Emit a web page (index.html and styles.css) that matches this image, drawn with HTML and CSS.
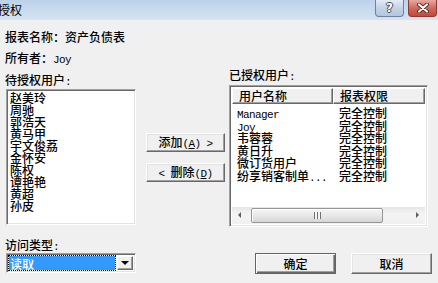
FILE: index.html
```html
<!DOCTYPE html>
<html lang="zh-CN">
<head>
    <meta charset="UTF-8">
    <title>授权</title>
    <link rel="stylesheet" href="styles.css">
</head>
<body>

    <div class="window">
        <div class="titlebar">
            <span class="title">授权</span>
            <div class="title-buttons">
                <span class="tb-btn help">?</span>
                <span class="tb-btn close">
                    <svg width="14" height="10" viewBox="0 0 14 10">
                        <path d="M3 1.5 L11 8.5 M11 1.5 L3 8.5" stroke="#5a2420" stroke-width="4" stroke-linecap="round"/>
                        <path d="M3 1.5 L11 8.5 M11 1.5 L3 8.5" stroke="#fff" stroke-width="2.2" stroke-linecap="round"/>
                    </svg>
                </span>
            </div>
        </div>

        <div class="content">
            <div class="info">报表名称：资产负债表</div>
            <div class="info owner">所有者：<span class="mono">Joy</span></div>

            <div class="lists">
                <div class="col-left">
                    <div class="label">待授权用户<span class="mono">:</span></div>
                    <ul class="listbox">
                        <li>赵美玲</li>
                        <li>周驰</li>
                        <li>郭浩天</li>
                        <li>黄马甲</li>
                        <li>宇文俊荔</li>
                        <li>金怀安</li>
                        <li>陈权</li>
                        <li>谭艳艳</li>
                        <li>黄超</li>
                        <li>孙皮</li>
                    </ul>
                </div>

                <div class="col-mid">
                    <button class="btn move">添加<span class="mono">(<u>A</u>) &gt;</span></button>
                    <button class="btn move"><span class="mono">&lt; </span>删除<span class="mono">(<u>D</u>)</span></button>
                </div>

                <div class="col-right">
                    <div class="label">已授权用户<span class="mono">:</span></div>
                    <div class="listview">
                        <div class="lv-head">
                            <span class="lv-col c1">用户名称</span>
                            <span class="lv-col c2">报表权限</span>
                            <span class="lv-fill"></span>
                        </div>
                        <div class="lv-body">
                            <div class="lv-row"><span class="c1 mono">Manager</span><span class="c2">完全控制</span></div>
                            <div class="lv-row"><span class="c1 mono">Joy</span><span class="c2">完全控制</span></div>
                            <div class="lv-row"><span class="c1">韦蓉蓉</span><span class="c2">完全控制</span></div>
                            <div class="lv-row"><span class="c1">黄日升</span><span class="c2">完全控制</span></div>
                            <div class="lv-row"><span class="c1">微订货用户</span><span class="c2">完全控制</span></div>
                            <div class="lv-row"><span class="c1">纷享销客制单<span class="mono">...</span></span><span class="c2">完全控制</span></div>
                        </div>
                        <div class="hscroll">
                            <span class="sb-arrow left"></span>
                            <span class="sb-thumb"><span class="grip"></span></span>
                            <span class="sb-track"></span>
                            <span class="sb-arrow right"></span>
                        </div>
                    </div>
                </div>
            </div>

            <div class="bottom">
                <div class="col-left">
                    <div class="label access">访问类型<span class="mono">:</span></div>
                    <div class="select">
                        <span class="sel-value">读取</span>
                        <span class="sel-btn"></span>
                    </div>
                </div>
                <div class="actions">
                    <button class="btn action default">确定</button>
                    <button class="btn action">取消</button>
                </div>
            </div>
        </div>
    </div>

</body>
</html>
```

FILE: styles.css
```css
* {
    box-sizing: border-box;
}

body {
    margin: 0;
    background: #f0f0f0;
    font-family: "Noto Sans CJK SC", sans-serif;
    font-size: 12px;
    font-weight: 500;
    line-height: 12px;
    color: #000;
}

.mono {
    font-family: "Liberation Mono", monospace;
    font-size: 11px;
    line-height: 10px;
    letter-spacing: -0.6px;
    font-weight: normal;
}

.window {
    width: 438px;
    height: 283px;
    overflow: hidden;
    background: #f0f0f0;
}

/* title bar */
.titlebar {
    height: 20px;
    display: flex;
    justify-content: space-between;
    align-items: flex-start;
    background: linear-gradient(#bcd2ea, #d5e3f2);
}

.title {
    margin-left: -2px;
    margin-top: 4px;
    font-weight: normal;
}

.title-buttons {
    display: flex;
    gap: 4px;
    margin-right: 1px;
}

.tb-btn {
    width: 29px;
    height: 17px;
    display: flex;
    align-items: center;
    justify-content: center;
    border-radius: 0 0 4px 4px;
    border: 1px solid #6f8299;
    border-top: none;
}

.help {
    background: linear-gradient(#e3ebf5, #c3d3e6 50%, #b2c6de);
    color: #fff;
    font-family: "DejaVu Sans", sans-serif;
    font-weight: bold;
    font-size: 12px;
    text-shadow: 1px 0 #3b4a5c, -1px 0 #3b4a5c, 0 1px #3b4a5c, 0 -1px #3b4a5c;
}

.close {
    border-color: #8a3a33;
    background: linear-gradient(#e8a89e, #cf6a5c 50%, #c14a3a);
}

/* content */
.content {
    padding: 11px 0 0 5px;
}

.info {
    height: 12px;
}

.owner {
    margin-top: 9px;
}

.lists {
    display: flex;
    align-items: flex-start;
    margin-top: 5px;
}

.col-left {
    width: 131px;
}

.lists .col-left {
    padding-top: 5px;
}

.label {
    height: 12px;
    margin-bottom: 3px;
}

.listbox,
.listview,
.select {
    border: 1px solid;
    border-color: #a0a0a0 #fff #fff #a0a0a0;
    box-shadow: inset 1px 1px #696969, inset -1px -1px #e3e3e3;
    background: #fff;
}

.listbox {
    list-style: none;
    margin: 0 0 0 1px;
    padding: 2px 0 0 3px;
    width: 130px;
    height: 136px;
}

.col-mid {
    margin-left: 10px;
    padding-top: 64px;
}

.btn {
    display: block;
    font-family: inherit;
    font-size: 12px;
    font-weight: 500;
    line-height: 12px;
    color: #000;
    padding: 0;
    background: #f0f0f0;
    border: 1px solid;
    border-color: #fff #696969 #696969 #fff;
    box-shadow: inset -1px -1px #a0a0a0, inset 1px 1px #e3e3e3;
}

.move {
    width: 79px;
    height: 19px;
}

.move + .move {
    margin-top: 11px;
}

.col-right {
    margin-left: 4px;
    width: 199px;
}

.col-right .label {
    margin-bottom: 4px;
}

.listview {
    height: 142px;
    padding: 2px;
    display: flex;
    flex-direction: column;
}

.lv-head {
    display: flex;
    height: 16px;
}

.lv-col {
    background: #f0f0f0;
    border: 1px solid;
    border-color: #fff #696969 #696969 #fff;
    box-shadow: inset -1px -1px #a0a0a0;
    padding: 1px 0 0 6px;
}

.lv-col.c1 {
    width: 101px;
}

.lv-col.c2 {
    width: 92px;
}

.lv-fill {
    flex: 1;
    background: #f0f0f0;
}

.lv-body {
    flex: 1;
    padding-top: 3px;
}

.lv-row {
    display: flex;
    align-items: baseline;
    height: 12.5px;
}

.lv-row .c1 {
    width: 102px;
    padding-left: 5px;
    white-space: nowrap;
}

.lv-row .c2 {
    padding-left: 5px;
}

/* horizontal scroll bar */
.hscroll {
    height: 17px;
    display: flex;
    align-items: center;
    background: linear-gradient(#e6e6e6, #f4f4f4 40%, #f0f0f0);
}

.sb-arrow {
    width: 17px;
    height: 17px;
    position: relative;
}

.sb-arrow::after {
    content: "";
    position: absolute;
    top: 5px;
    border-top: 3px solid transparent;
    border-bottom: 3px solid transparent;
}

.sb-arrow.left::after {
    left: 6px;
    border-right: 3px solid #5c5c5c;
}

.sb-arrow.right::after {
    left: 8px;
    border-left: 3px solid #5c5c5c;
}

.sb-thumb {
    width: 132px;
    height: 15px;
    margin-left: 2px;
    border: 1px solid #969696;
    border-radius: 2px;
    background: linear-gradient(#f6f6f6, #e8e8e8 50%, #d6d6d6);
    box-shadow: inset 1px 1px #fff;
    display: flex;
    align-items: center;
    justify-content: center;
}

.grip {
    width: 7px;
    height: 7px;
    background: repeating-linear-gradient(90deg, #707070 0 1px, #f4f4f4 1px 3px);
}

.sb-track {
    flex: 1;
}

/* bottom row */
.bottom {
    display: flex;
    margin-top: 12px;
}

.label.access {
    margin-bottom: 2px;
}

.select {
    width: 130px;
    height: 20px;
    margin-left: 1px;
    padding: 2px;
    display: flex;
}

.sel-value {
    flex: 1;
    background: #3399ff;
    color: #fff;
    outline: 1px dotted #000;
    padding: 2px 0 0 1px;
}

.sel-btn {
    width: 16px;
    margin-left: 2px;
    background: #f0f0f0;
    border: 1px solid;
    border-color: #fff #696969 #696969 #fff;
    box-shadow: inset -1px -1px #a0a0a0;
    display: flex;
    align-items: center;
    justify-content: center;
}

.sel-btn::after {
    content: "";
    border-left: 4px solid transparent;
    border-right: 4px solid transparent;
    border-top: 4px solid #000;
}

.actions {
    display: flex;
    gap: 15px;
    margin-left: 119px;
    padding-top: 14px;
}

.action {
    width: 81px;
    height: 21px;
}

.action.default {
    border-color: #646464;
    box-shadow: inset 1px 1px #fff, inset -1px -1px #696969, inset -2px -2px #a0a0a0;
}
```
